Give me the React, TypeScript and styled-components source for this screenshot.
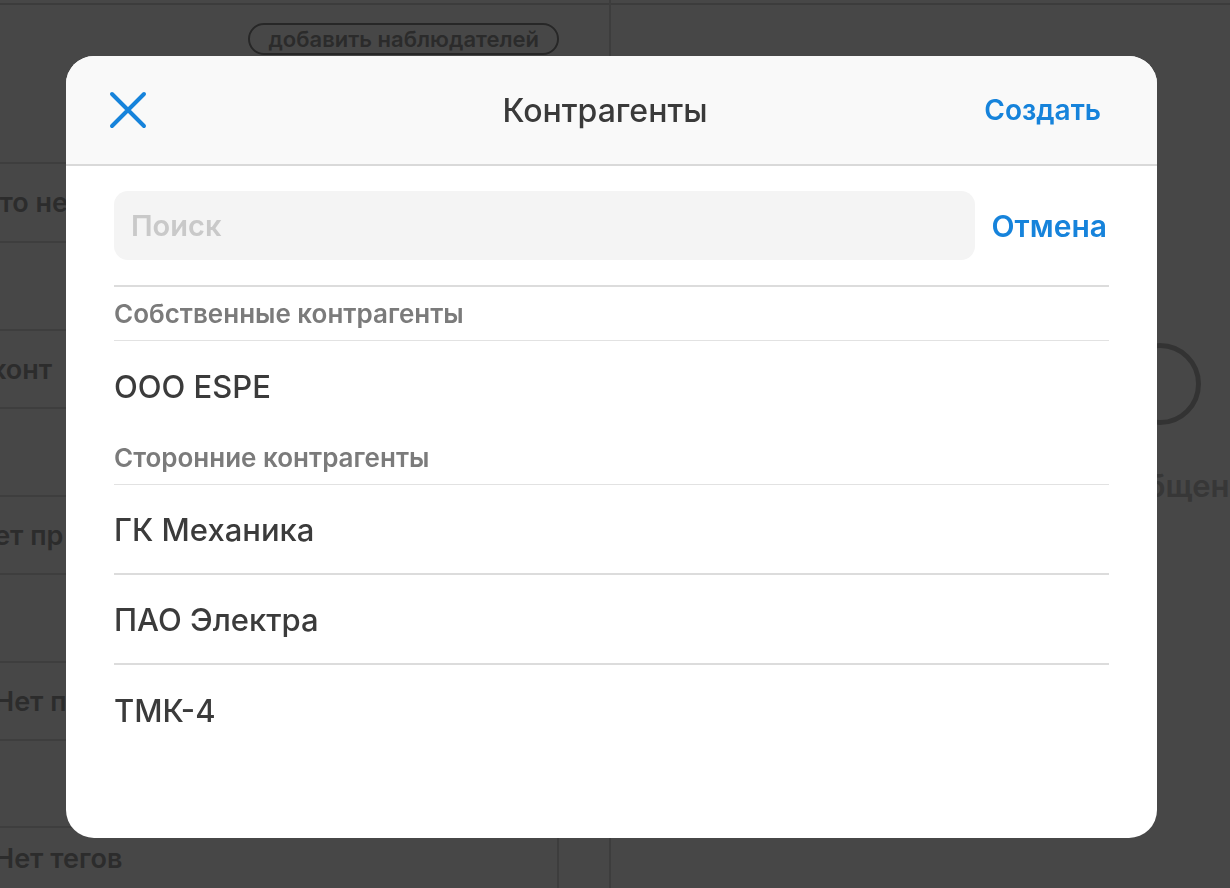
import { styled, createGlobalStyle } from "styled-components";

const GlobalStyle = createGlobalStyle`
  html, body {
    margin: 0;
    padding: 0;
    width: 1230px;
    height: 888px;
    overflow: hidden;
    background: #fff;
  }
  * {
    box-sizing: border-box;
  }
`;

const FONT = `"Inter", "Noto Sans", "Open Sans", sans-serif`;

const ownContractors = ["ООО ESPE"];
const otherContractors = ["ГК Механика", "ПАО Электра", "ТМК-4"];

function CloseIcon() {
  return (
    <svg width="38" height="38" viewBox="0 0 38 38" fill="none">
      <path
        d="M3 3 L35 35 M35 3 L3 35"
        stroke="#1683db"
        strokeWidth="4"
        strokeLinecap="round"
      />
    </svg>
  );
}

function App() {
  return (
    <>
      <GlobalStyle />
      <Page>
        <LeftPanel>
          <TopBar />
          <PillRow>
            <Pill>добавить наблюдателей</Pill>
          </PillRow>
          <BgRow $h={108} />
          <BgRow $h={79}>
            <BgClip>
              <BgText $indent={-20}>Что не</BgText>
            </BgClip>
          </BgRow>
          <BgRow $h={88} />
          <BgRow $h={78}>
            <BgClip>
              <BgText $indent={-9}>конт</BgText>
            </BgClip>
          </BgRow>
          <BgRow $h={88} />
          <BgRow $h={78}>
            <BgClip>
              <BgText $indent={-26}>Нет пр</BgText>
            </BgClip>
          </BgRow>
          <BgRow $h={88} />
          <BgRow $h={78}>
            <BgClip>
              <BgText $indent={-6}>Нет п</BgText>
            </BgClip>
          </BgRow>
          <BgRow $h={87} />
          <BgLast>
            <BgText $indent={-6}>Нет тегов</BgText>
          </BgLast>
        </LeftPanel>
        <RightPanel>
          <TopBar />
          <EmptyChat>
            <EmptyCircle />
            <EmptyText>Нет сообщений</EmptyText>
          </EmptyChat>
        </RightPanel>
      </Page>

      <Overlay>
        <Modal>
          <Header>
            <CloseButton>
              <CloseIcon />
            </CloseButton>
            <Title>Контрагенты</Title>
            <TextButton>Создать</TextButton>
          </Header>
          <Body>
            <SearchRow>
              <SearchInput placeholder="Поиск" />
              <CancelButton>Отмена</CancelButton>
            </SearchRow>
            <List>
              <SectionTitle>Собственные контрагенты</SectionTitle>
              {ownContractors.map((name) => (
                <Item key={name} $last>
                  {name}
                </Item>
              ))}
              <SectionTitle>Сторонние контрагенты</SectionTitle>
              {otherContractors.map((name, i) => (
                <Item key={name} $last={i === otherContractors.length - 1}>
                  {name}
                </Item>
              ))}
            </List>
          </Body>
        </Modal>
      </Overlay>
    </>
  );
}

export default App;

const Page = styled.div`
  display: flex;
  width: 1230px;
  height: 888px;
  overflow: hidden;
  font-family: ${FONT};
`;

const LeftPanel = styled.div`
  flex: 0 0 611px;
  display: flex;
  flex-direction: column;
  border-right: 2px solid #dcdcdc;
  overflow: hidden;
`;

const TopBar = styled.div`
  height: 5px;
  flex-shrink: 0;
  border-bottom: 2px solid #d6d6d6;
`;

const PillRow = styled.div`
  display: flex;
  justify-content: flex-end;
  padding: 18px 50px 0 0;
  height: 51px;
`;

const Pill = styled.div`
  height: 32px;
  padding: 0 18px;
  border: 2px solid #8c8c8c;
  border-radius: 16px;
  display: flex;
  align-items: center;
  font-size: 22px;
  font-weight: 600;
  color: #9c9c9c;
  white-space: nowrap;
`;

const BgRow = styled.div<{ $h?: number }>`
  height: ${(p) => p.$h ?? 80}px;
  flex-shrink: 0;
  margin-right: 50px;
  border-bottom: 2px solid #dddddd;
  display: flex;
  align-items: center;
  overflow: hidden;
`;

const BgLast = styled(BgRow)`
  flex: 1;
  border-bottom: none;
  border-right: 2px solid #dcdcdc;
`;

const BgClip = styled.div`
  width: 70px;
  overflow: hidden;
  display: flex;
`;

const BgText = styled.span<{ $indent: number }>`
  margin-left: ${(p) => p.$indent}px;
  font-size: 27px;
  font-weight: 600;
  color: #9e9e9e;
  white-space: nowrap;
`;

const RightPanel = styled.div`
  flex: 0 0 1098px;
  display: flex;
  flex-direction: column;
`;

const EmptyChat = styled.div`
  display: flex;
  flex-direction: column;
  align-items: center;
  padding-top: 338px;
  gap: 42px;
`;

const EmptyCircle = styled.div`
  width: 82px;
  height: 82px;
  border-radius: 50%;
  border: 5px solid #b8b8b8;
`;

const EmptyText = styled.div`
  margin-right: 26px;
  font-size: 31px;
  font-weight: 600;
  color: #c4c4c4;
`;

const Overlay = styled.div`
  position: fixed;
  inset: 0;
  background: rgba(0, 0, 0, 0.72);
  display: flex;
  align-items: flex-start;
  justify-content: flex-start;
  padding: 56px 0 0 66px;
  font-family: ${FONT};
`;

const Modal = styled.div`
  width: 1091px;
  height: 782px;
  background: #fff;
  border-radius: 28px;
  overflow: hidden;
  display: flex;
  flex-direction: column;
`;

const Header = styled.div`
  height: 110px;
  flex-shrink: 0;
  background: #f9f9f9;
  border-bottom: 2px solid #d9d9d9;
  display: grid;
  grid-template-columns: 1fr auto 1fr;
  align-items: center;
  padding: 0 56px 0 43px;
`;

const CloseButton = styled.button`
  justify-self: start;
  background: none;
  border: none;
  padding: 0;
  display: flex;
  cursor: pointer;
`;

const Title = styled.div`
  font-size: 32px;
  font-weight: 500;
  color: #3a3a3a;
`;

const TextButton = styled.button`
  justify-self: end;
  background: none;
  border: none;
  padding: 0;
  font-family: ${FONT};
  font-size: 28px;
  font-weight: 600;
  color: #1683db;
  cursor: pointer;
`;

const Body = styled.div`
  padding: 25px 48px 0 48px;
  display: flex;
  flex-direction: column;
`;

const SearchRow = styled.div`
  display: flex;
  align-items: center;
  gap: 17px;
  padding-bottom: 25px;
  border-bottom: 2px solid #dcdcdc;
`;

const SearchInput = styled.input`
  flex: 1;
  height: 69px;
  border: none;
  outline: none;
  border-radius: 14px;
  background: #f4f4f4;
  padding: 0 17px;
  font-family: ${FONT};
  font-size: 29px;
  font-weight: 600;
  color: #333;

  &::placeholder {
    color: #c9c9c9;
  }
`;

const CancelButton = styled(TextButton)`
  font-size: 30px;
  margin-right: 2px;
`;

const List = styled.div`
  display: flex;
  flex-direction: column;
`;

const SectionTitle = styled.div`
  height: 54px;
  display: flex;
  align-items: center;
  border-bottom: 1px solid #e2e2e2;
  font-size: 26px;
  font-weight: 600;
  color: #7b7b7b;
`;

const Item = styled.div<{ $last?: boolean }>`
  height: 90px;
  display: flex;
  align-items: center;
  border-bottom: ${(p) => (p.$last ? "none" : "2px solid #dcdcdc")};
  font-size: 31px;
  font-weight: 500;
  color: #3b3b3b;
`;
